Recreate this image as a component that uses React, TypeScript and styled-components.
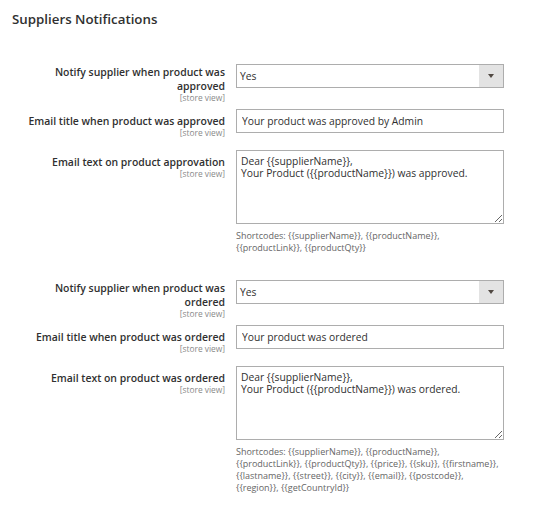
import React from "react";
import styled, { createGlobalStyle } from "styled-components";

const GlobalStyle = createGlobalStyle`
  html, body { margin: 0; padding: 0; background: #ffffff; }
  body { font-family: "Open Sans", "Liberation Sans", sans-serif; color: #303030; }
  * { box-sizing: border-box; }
`;

const Page = styled.div`
  width: 533px;
  min-height: 508px;
  padding: 10px 0 0 12px;
`;

const Title = styled.h2`
  margin: 0 0 35px 0;
  font-size: 13.3px;
  line-height: 19px;
  font-weight: 600;
  color: #303030;
`;

const Row = styled.div<{ $after: number }>`
  display: grid;
  grid-template-columns: 213px 268px;
  column-gap: 11px;
  align-items: start;
  margin-bottom: ${(p) => p.$after}px;
`;

const Label = styled.label<{ $pad: number }>`
  justify-self: end;
  max-width: 205px;
  padding-top: ${(p) => p.$pad}px;
  text-align: right;
  font-size: 10.45px;
  line-height: 14px;
  font-weight: 600;
  color: #303030;
`;

const Scope = styled.span`
  display: block;
  font-size: 8.4px;
  line-height: 10px;
  font-weight: 400;
  color: #8a8a8a;
`;

const Field = styled.div`
  display: flex;
  flex-direction: column;
`;

const SelectBox = styled.div`
  display: flex;
  align-items: stretch;
  height: 24px;
  border: 1px solid #adadad;
  background: #ffffff;
`;

const SelectValue = styled.span`
  flex: 1;
  padding: 0 3px;
  font-size: 10.3px;
  line-height: 22px;
  color: #303030;
`;

const SelectArrow = styled.span`
  width: 24px;
  display: flex;
  align-items: center;
  justify-content: center;
  background: #e3e3e3;
  &::after {
    content: "";
    width: 0;
    height: 0;
    border-left: 3.5px solid transparent;
    border-right: 3.5px solid transparent;
    border-top: 4px solid #514943;
  }
`;

const TextInput = styled.input`
  height: 24px;
  width: 100%;
  margin: 0;
  padding: 0 5px;
  border: 1px solid #adadad;
  border-radius: 0;
  font-family: "Open Sans", "Liberation Sans", sans-serif;
  font-size: 10.3px;
  line-height: 22px;
  color: #303030;
  outline: none;
`;

const TextArea = styled.textarea`
  display: block;
  width: 100%;
  height: 74px;
  margin: 0;
  padding: 5px 4px;
  border: 1px solid #adadad;
  border-radius: 0;
  font-family: "Open Sans", "Liberation Sans", sans-serif;
  font-size: 10.3px;
  line-height: 11.6px;
  color: #303030;
  resize: vertical;
  outline: none;
`;

const Note = styled.div`
  margin-top: 6px;
  font-size: 9px;
  line-height: 12px;
  color: #666666;
`;

type RowData =
  | { kind: "select"; label: string; value: string }
  | { kind: "input"; label: string; value: string }
  | { kind: "textarea"; label: string; value: string; note: string; after: number };

const rows: RowData[] = [
  { kind: "select", label: "Notify supplier when product was approved", value: "Yes" },
  { kind: "input", label: "Email title when product was approved", value: "Your product was approved by Admin" },
  {
    kind: "textarea",
    label: "Email text on product approvation",
    value: "Dear {{supplierName}},\nYour Product ({{productName}}) was approved.",
    note: "Shortcodes: {{supplierName}}, {{productName}}, {{productLink}}, {{productQty}}",
    after: 26,
  },
  { kind: "select", label: "Notify supplier when product was ordered", value: "Yes" },
  { kind: "input", label: "Email title when product was ordered", value: "Your product was ordered" },
  {
    kind: "textarea",
    label: "Email text on product was ordered",
    value: "Dear {{supplierName}},\nYour Product ({{productName}}) was ordered.",
    note: "Shortcodes: {{supplierName}}, {{productName}}, {{productLink}}, {{productQty}}, {{price}}, {{sku}}, {{firstname}}, {{lastname}}, {{street}}, {{city}}, {{email}}, {{postcode}}, {{region}}, {{getCountryId}}",
    after: 0,
  },
];

function renderField(r: RowData) {
  if (r.kind === "select") {
    return (
      <SelectBox>
        <SelectValue>{r.value}</SelectValue>
        <SelectArrow />
      </SelectBox>
    );
  }
  if (r.kind === "input") {
    return <TextInput type="text" defaultValue={r.value} />;
  }
  return (
    <>
      <TextArea defaultValue={r.value} />
      <Note>{r.note}</Note>
    </>
  );
}

export default function App() {
  return (
    <>
      <GlobalStyle />
      <Page>
        <Title>Suppliers Notifications</Title>
        {rows.map((r, i) => {
          const after = r.kind === "select" ? 6 : r.kind === "input" ? 12.5 : r.after;
          const pad = r.kind === "select" ? 1 : 4.5;
          return (
            <Row key={i} $after={after}>
              <Label $pad={pad}>
                {r.label}
                <Scope>[store view]</Scope>
              </Label>
              <Field>{renderField(r)}</Field>
            </Row>
          );
        })}
      </Page>
    </>
  );
}
